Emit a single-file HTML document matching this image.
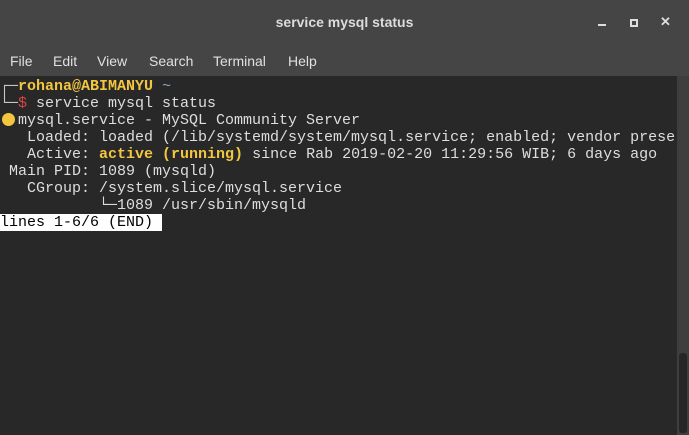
<!DOCTYPE html>
<html><head><style>
body{margin:0;width:689px;height:435px;background:#454545;overflow:hidden;position:relative;font-family:"Liberation Sans",sans-serif}
.title{position:absolute;top:14px;left:0;width:689px;text-align:center;color:#dcdcdc;font-weight:bold;font-size:14px}
.menu span{position:absolute;top:53px;color:#e0e0e0;font-size:14px}
.term{position:absolute;top:76px;left:0;width:677px;height:359px;background:#282828}
.sb{position:absolute;top:76px;left:677px;width:12px;height:359px;background:#3e3e3e}
.thumb{position:absolute;top:353px;left:679px;width:8px;height:80px;background:#262626;border-radius:3px}
pre{margin:0;position:absolute;top:78px;left:0;font-family:"Liberation Mono",monospace;font-size:15px;line-height:17px;color:#dedede;white-space:pre}
.y{color:#f2c63e;font-weight:bold}.r{color:#d64545}.b{color:#8aa4c8}.g{color:#c8c8c8}
.sel{background:#fff;color:#000}
.dot{display:inline-block;width:13px;height:13px;border-radius:50%;background:#f2c63e;margin:0 3px 0 2px;vertical-align:-2px}
</style></head><body>
<div class="title">service mysql status</div>
<div style="position:absolute;left:598px;top:24px;width:8px;height:2px;background:#ddd"></div>
<div style="position:absolute;left:630px;top:19px;width:4px;height:4px;border:2px solid #ddd"></div>
<div style="position:absolute;left:660px;top:14px;color:#ddd;font-size:13px;font-weight:bold">✕</div>
<div class="menu"><span style="left:10px">File</span><span style="left:53px">Edit</span><span style="left:97px">View</span><span style="left:149px">Search</span><span style="left:213px">Terminal</span><span style="left:288px">Help</span></div>
<div class="term"></div><div class="sb"></div><div class="thumb"></div>
<pre><span class="g">┌─</span><span class="y">rohana@ABIMANYU</span> <span class="b">~</span>
<span class="g">└─</span><span class="r">$</span> service mysql status
<span class="dot"></span>mysql.service - MySQL Community Server
   Loaded: loaded (/lib/systemd/system/mysql.service; enabled; vendor prese
   Active: <span class="y">active (running)</span> since Rab 2019-02-20 11:29:56 WIB; 6 days ago
 Main PID: 1089 (mysqld)
   CGroup: /system.slice/mysql.service
           └─1089 /usr/sbin/mysqld
<span class="sel">lines 1-6/6 (END) </span></pre>
</body></html>
